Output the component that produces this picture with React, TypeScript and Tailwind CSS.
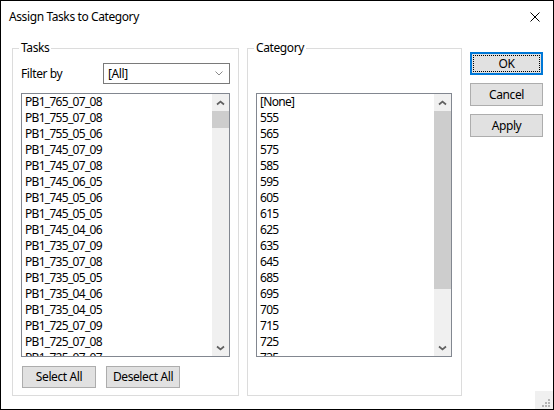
import { ReactNode } from "react";

const tasks = [
  "PB1_765_07_08",
  "PB1_755_07_08",
  "PB1_755_05_06",
  "PB1_745_07_09",
  "PB1_745_07_08",
  "PB1_745_06_05",
  "PB1_745_05_06",
  "PB1_745_05_05",
  "PB1_745_04_06",
  "PB1_735_07_09",
  "PB1_735_07_08",
  "PB1_735_05_05",
  "PB1_735_04_06",
  "PB1_735_04_05",
  "PB1_725_07_09",
  "PB1_725_07_08",
  "PB1_725_07_07",
];

const categories = [
  "[None]",
  "555",
  "565",
  "575",
  "585",
  "595",
  "605",
  "615",
  "625",
  "635",
  "645",
  "685",
  "695",
  "705",
  "715",
  "725",
  "735",
];

function Arrow({ down }: { down?: boolean }) {
  return (
    <svg width="9" height="6" viewBox="0 0 9 6">
      <polyline
        points={down ? "1,1.5 4.5,4.5 8,1.5" : "1,4.5 4.5,1.5 8,4.5"}
        fill="none"
        stroke="#606060"
        strokeWidth="1.7"
      />
    </svg>
  );
}

// thumb: full class for the thumb height
function ScrollBar({ thumb }: { thumb: string }) {
  return (
    <div className="flex w-[17px] shrink-0 flex-col bg-[#f0f0f0]">
      <div className="flex h-[17px] items-center justify-center">
        <Arrow />
      </div>
      <div className={`bg-[#cdcdcd] ${thumb}`} />
      <div className="flex-1" />
      <div className="flex h-[17px] items-center justify-center">
        <Arrow down />
      </div>
    </div>
  );
}

function ListBox({ items, thumb, className = "" }: { items: string[]; thumb: string; className?: string }) {
  return (
    <div className={`flex h-[264px] border border-[#828790] bg-white ${className}`}>
      <div className="flex-1 overflow-hidden pl-[3px] tracking-[-0.7px]">
        {items.map((item) => (
          <div key={item} className="h-[16px] whitespace-nowrap leading-[16px]">
            {item}
          </div>
        ))}
      </div>
      <ScrollBar thumb={thumb} />
    </div>
  );
}

function Button({ children, className = "" }: { children: ReactNode; className?: string }) {
  return (
    <button className={`border border-[#adadad] bg-[#e1e1e1] text-[12px] leading-none tracking-[-0.4px] text-black ${className}`}>
      {children}
    </button>
  );
}

export default function App() {
  return (
    <div className="relative flex h-[410px] w-[554px] flex-col border border-black bg-white font-['Noto_Sans',sans-serif] text-[12px] tracking-[-0.4px] text-black">
      {/* title bar */}
      <div className="flex h-[31px] shrink-0 items-center justify-between pl-[8px] pr-[13px]">
        <span>Assign Tasks to Category</span>
        <svg width="10" height="10" viewBox="0 0 10 10">
          <path d="M0.5 0.5 L9.5 9.5 M9.5 0.5 L0.5 9.5" stroke="#000" strokeWidth="1" />
        </svg>
      </div>

      <div className="flex pl-[11px] pt-[8px]">
        {/* Tasks */}
        <fieldset className="h-[356px] w-[227px] border border-[#dcdcdc] px-[8px] pt-[7px]">
          <legend className="ml-[-2px] px-[2px] leading-[16px]">Tasks</legend>
          <div className="flex h-[21px] items-center">
            <span className="w-[82px]">Filter by</span>
            <div className="flex h-[21px] flex-1 items-center justify-between border border-[#7a7a7a] bg-white pl-[4px] pr-[6px]">
              <span>[All]</span>
              <svg width="8" height="5" viewBox="0 0 8 5">
                <polyline points="0.5,0.5 4,4 7.5,0.5" fill="none" stroke="#8a8a8a" strokeWidth="1" />
              </svg>
            </div>
          </div>
          <ListBox items={tasks} thumb="h-[17px]" className="mt-[9px]" />
          <div className="mt-[9px] flex gap-[10px] pl-[1px]">
            <Button className="h-[22px] w-[74px]">Select All</Button>
            <Button className="h-[22px] w-[74px]">Deselect All</Button>
          </div>
        </fieldset>

        {/* Category */}
        <fieldset className="ml-[8px] h-[356px] w-[215px] border border-[#dcdcdc] px-[8px] pt-[37px]">
          <legend className="ml-[-2px] px-[2px] leading-[16px]">Category</legend>
          <ListBox items={categories} thumb="h-[178px]" className="w-[196px]" />
        </fieldset>

        {/* buttons */}
        <div className="ml-[8px] mt-[12px] flex flex-col gap-[8px]">
          <button className="relative h-[23px] w-[73px] border-2 border-[#0078d7] bg-[#e1e1e1] text-[12px] leading-none">
            <span className="absolute inset-[1px] border border-dotted border-black" />
            OK
          </button>
          <Button className="h-[23px] w-[73px]">Cancel</Button>
          <Button className="h-[23px] w-[73px]">Apply</Button>
        </div>
      </div>

      {/* size grip */}
      <div className="absolute bottom-0 right-0 h-[18px] w-[18px] bg-[#f0f0f0]">
        <svg width="18" height="18" viewBox="0 0 18 18">
          <g fill="#b4b4b4">
            <rect x="13" y="8" width="2" height="2" />
            <rect x="10" y="11" width="2" height="2" />
            <rect x="13" y="11" width="2" height="2" />
            <rect x="7" y="14" width="2" height="2" />
            <rect x="10" y="14" width="2" height="2" />
            <rect x="13" y="14" width="2" height="2" />
          </g>
        </svg>
      </div>
    </div>
  );
}
